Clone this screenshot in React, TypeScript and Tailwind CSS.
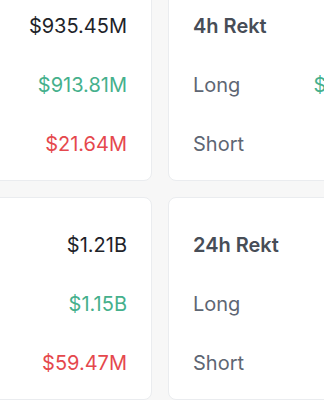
const stats = [
  { title: "1h Rekt", total: "$935.45M", long: "$913.81M", short: "$21.64M" },
  { title: "4h Rekt", total: "$157.3M", long: "$136.28M", short: "$21.07M" },
  { title: "12h Rekt", total: "$1.21B", long: "$1.15B", short: "$59.47M" },
  { title: "24h Rekt", total: "$3.64B", long: "$3.52B", short: "$118.9M" },
]

function RektCard({ title, total, long, short }: (typeof stats)[number]) {
  return (
    <div className="rounded-lg border border-[#eaecef] bg-white px-6 pt-[17px] pb-[7px]">
      <div className="flex h-[59px] items-center justify-between">
        <span className="font-semibold text-[#474d57]">{title}</span>
        <span className="text-[#1e2329]">{total}</span>
      </div>
      <div className="flex h-[59px] items-center justify-between">
        <span className="text-[#5e6673]">Long</span>
        <span className="text-[#45b08c]">{long}</span>
      </div>
      <div className="flex h-[59px] items-center justify-between">
        <span className="text-[#5e6673]">Short</span>
        <span className="text-[#e5484d]">{short}</span>
      </div>
    </div>
  )
}

export default function App() {
  return (
    <div
      className="h-screen w-screen overflow-hidden bg-[#f7f7f7] text-[20px]"
      style={{ fontFamily: "Inter, 'Noto Sans', sans-serif" }}
    >
      <div className="-mt-[22px] -ml-[112px] grid w-[544px] grid-cols-[264px_264px] gap-4">
        {stats.map((s) => (
          <RektCard key={s.title} {...s} />
        ))}
      </div>
    </div>
  )
}
